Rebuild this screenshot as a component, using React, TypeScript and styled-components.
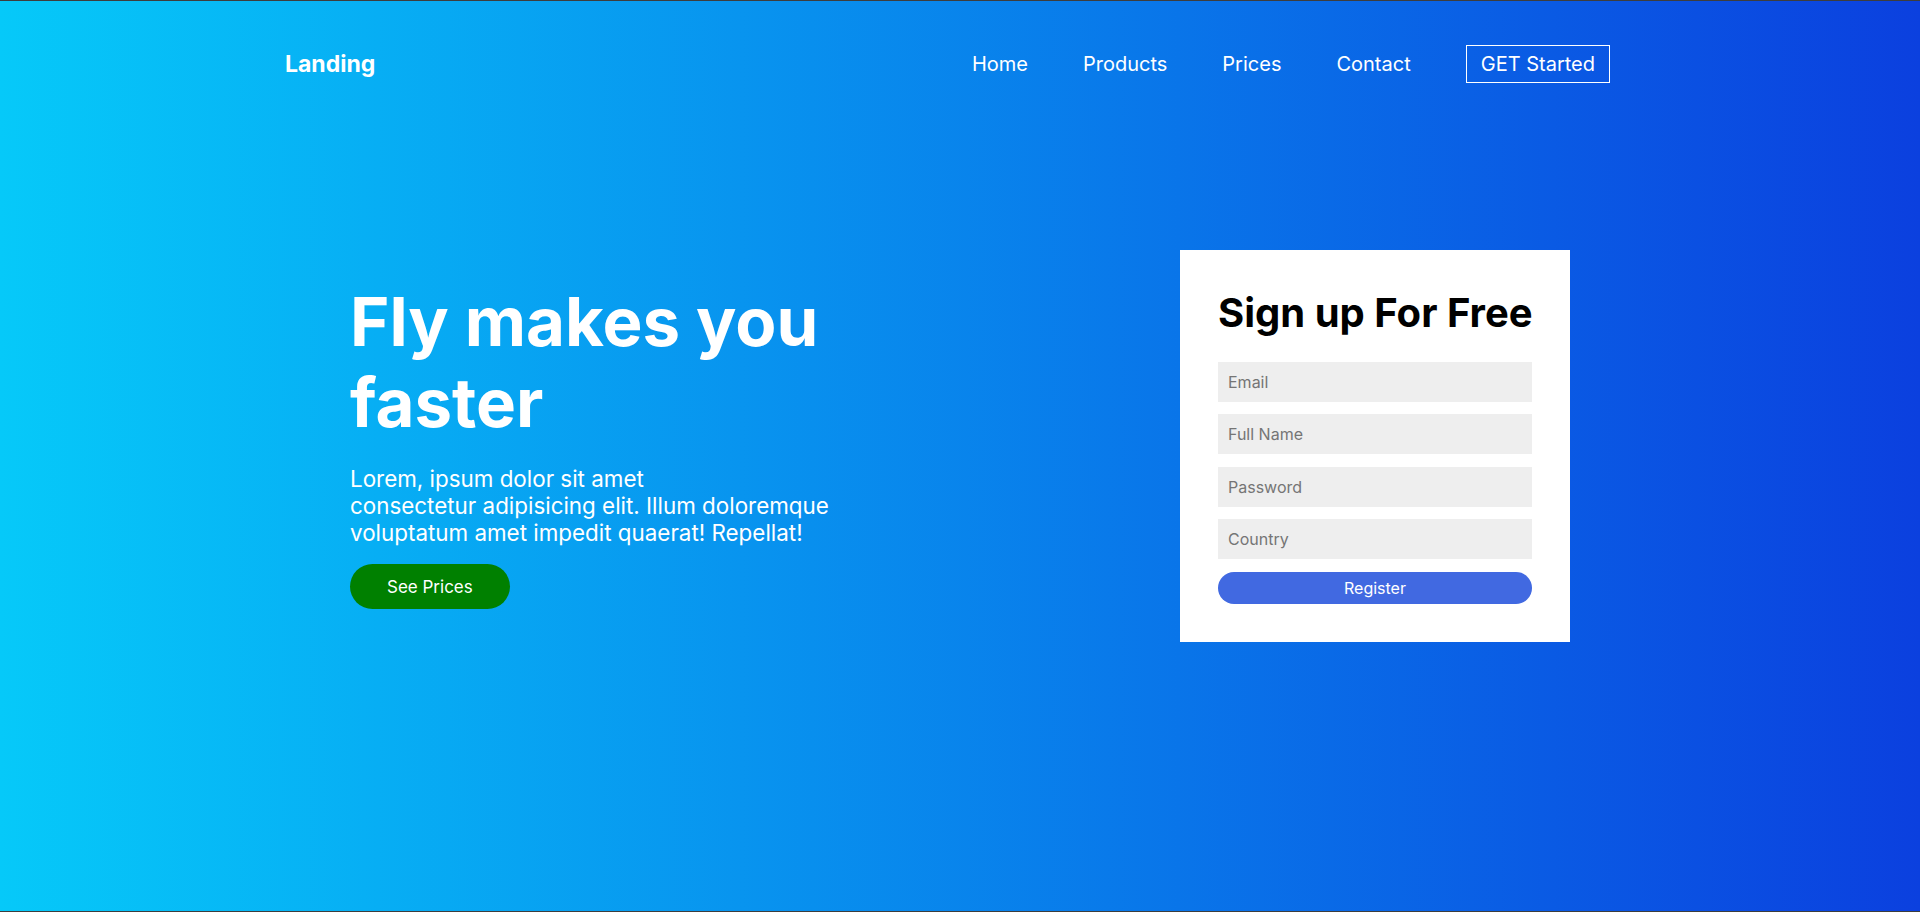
import React from "react";
import styled, { createGlobalStyle } from "styled-components";

const GlobalStyle = createGlobalStyle`
  * {
    box-sizing: border-box;
  }
  html, body {
    margin: 0;
    padding: 0;
  }
  body {
    font-family: "Inter", "Liberation Sans", sans-serif;
  }
`;

export const Page = styled.div`
  height: 912px;
  width: 100%;
  background: linear-gradient(to right, #06c9f9, #0b40df);
  border-top: 1px solid #3d3d3d;
  border-bottom: 1px solid #3d3d3d;
  color: #ffffff;
  display: flex;
  flex-direction: column;
`;

export const Navbar = styled.nav`
  display: flex;
  align-items: center;
  justify-content: space-between;
  padding: 44px 310px 0 285px;
`;

export const Logo = styled.div`
  font-size: 23px;
  font-weight: 700;
`;

export const Menu = styled.ul`
  display: flex;
  align-items: center;
  gap: 55px;
  list-style: none;
  margin: 0;
  padding: 0;
`;

export const MenuItem = styled.li<{ $boxed?: boolean }>`
  font-size: 20px;
  line-height: 24px;
  padding: ${(p) => (p.$boxed ? "6px 14px" : "0")};
  border: ${(p) => (p.$boxed ? "1px solid #ffffff" : "none")};
  cursor: pointer;
`;

export const Hero = styled.section`
  display: flex;
  align-items: center;
  justify-content: space-between;
  padding: 0 350px;
  margin-top: 167px;
`;

export const HeroText = styled.div`
  width: 500px;
  display: flex;
  flex-direction: column;
  align-items: flex-start;
`;

export const Title = styled.h1`
  font-size: 67.2px;
  line-height: 80.5px;
  font-weight: 700;
  margin: 0;
`;

export const Lead = styled.p`
  font-size: 22.4px;
  line-height: 27px;
  margin: 22px 0 0;
`;

export const PriceButton = styled.button`
  background: #008000;
  color: #ffffff;
  border: none;
  border-radius: 23px;
  height: 45px;
  padding: 0 37px;
  font-family: inherit;
  font-size: 17px;
  margin-top: 18px;
  cursor: pointer;
`;

export const Card = styled.form`
  width: 390px;
  background: #ffffff;
  padding: 38px;
  display: flex;
  flex-direction: column;
  gap: 12.5px;
`;

export const CardTitle = styled.h2`
  color: #000000;
  font-size: 40px;
  font-weight: 700;
  white-space: nowrap;
  margin: 0 0 12px;
`;

export const Input = styled.input`
  width: 100%;
  height: 40px;
  border: none;
  outline: none;
  background: #eeeeee;
  padding: 0 10px;
  font-family: inherit;
  font-size: 16px;
  color: #333333;

  &::placeholder {
    color: #757575;
  }
`;

export const RegisterButton = styled.button`
  height: 32px;
  width: 100%;
  border: none;
  border-radius: 16px;
  background: #4169e1;
  color: #ffffff;
  font-family: inherit;
  font-size: 16px;
  cursor: pointer;
`;

const links = ["Home", "Products", "Prices", "Contact"];

const App = () => {
  return (
    <>
      <GlobalStyle />
      <Page>
        <Navbar>
          <Logo>Landing</Logo>
          <Menu>
            {links.map((l) => (
              <MenuItem key={l}>{l}</MenuItem>
            ))}
            <MenuItem $boxed>GET Started</MenuItem>
          </Menu>
        </Navbar>
        <Hero>
          <HeroText>
            <Title>Fly makes you faster</Title>
            <Lead>
              Lorem, ipsum dolor sit amet
              <br />
              consectetur adipisicing elit. Illum doloremque voluptatum amet
              impedit quaerat! Repellat!
            </Lead>
            <PriceButton type="button">See Prices</PriceButton>
          </HeroText>
          <Card onSubmit={(e) => e.preventDefault()}>
            <CardTitle>Sign up For Free</CardTitle>
            <Input type="email" placeholder="Email" />
            <Input type="text" placeholder="Full Name" />
            <Input type="password" placeholder="Password" />
            <Input type="text" placeholder="Country" />
            <RegisterButton type="submit">Register</RegisterButton>
          </Card>
        </Hero>
      </Page>
    </>
  );
};

export default App;
